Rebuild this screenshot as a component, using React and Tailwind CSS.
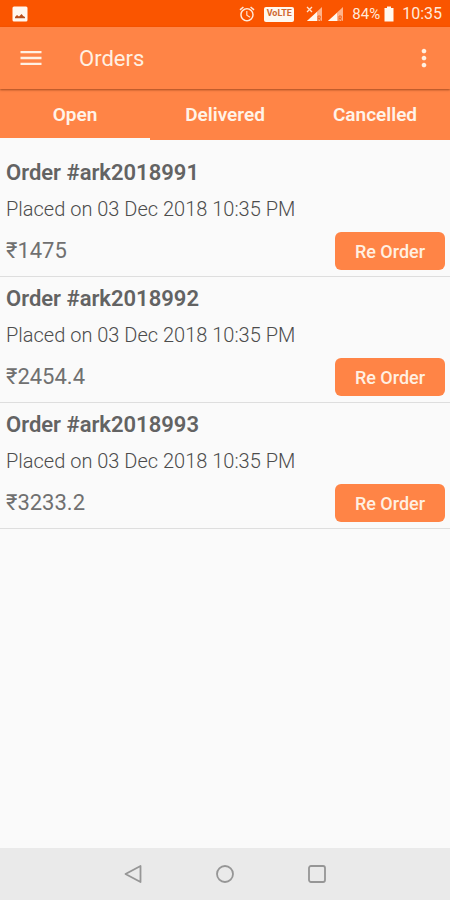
import { useState } from "react";
import clsx from "clsx";
import { MdAlarm, MdMenu, MdMoreVert } from "react-icons/md";

const tabs = ["Open", "Delivered", "Cancelled"];

const orders = [
  { id: "ark2018991", placedOn: "03 Dec 2018 10:35 PM", total: "1475" },
  { id: "ark2018992", placedOn: "03 Dec 2018 10:35 PM", total: "2454.4" },
  { id: "ark2018993", placedOn: "03 Dec 2018 10:35 PM", total: "3233.2" },
];

function PictureIcon() {
  return (
    <svg width="16" height="16" viewBox="0 0 16 16" aria-hidden="true">
      <rect x="0.5" y="0.5" width="15" height="15" rx="1.5" fill="#fff8f0" />
      <path d="M3 12.3V11l2-2 2 1.4L9.6 8l1.6 2 1.8 1v1.3z" fill="#b9501c" />
    </svg>
  );
}

function NoSignalIcon() {
  return (
    <svg width="17" height="17" viewBox="0 0 17 17" aria-hidden="true">
      <path d="M16 1v14H1z" fill="#ffb38a" />
      <path d="M11 6v9H1z" fill="#fff8f0" />
      <path d="M1 1l5 5M6 1L1 6" stroke="#ffe3cf" strokeWidth="1.3" />
      <path d="M12 15v-5h2.2v2.4H12M13 12.4l2.2 2.6" fill="none" stroke="#f2641c" strokeWidth="1" />
    </svg>
  );
}

function SignalIcon() {
  return (
    <svg width="17" height="17" viewBox="0 0 17 17" aria-hidden="true">
      <path d="M16 1v14H1z" fill="#ffb38a" />
      <path d="M10 7v8H1z" fill="#fff8f0" />
      <path d="M12 15v-5h2.2v2.4H12M13 12.4l2.2 2.6" fill="none" stroke="#f2641c" strokeWidth="1" />
    </svg>
  );
}

function BatteryIcon() {
  return (
    <svg width="10" height="16" viewBox="0 0 10 16" aria-hidden="true">
      <path d="M3 0.5h4V2h2.5v13.5h-9V2H3z" fill="#fff8f0" />
    </svg>
  );
}

function StatusBar() {
  return (
    <div className="flex h-[27px] items-center bg-[#fa5500] pt-px pr-2 pl-3 text-base text-[#ffe9da]">
      <PictureIcon />
      <MdAlarm className="ml-auto size-[18px]" />
      <span className="ml-2 flex h-[15px] w-[30px] items-center justify-center rounded-xs bg-[#fff8f0] text-[9px] font-bold text-[#d0692f]">
        VoLTE
      </span>
      <span className="ml-3 flex gap-1">
        <NoSignalIcon />
        <SignalIcon />
      </span>
      <span className="ml-2 text-[15px]">84%</span>
      <span className="ml-1">
        <BatteryIcon />
      </span>
      <span className="ml-2">10:35</span>
    </div>
  );
}

function AppBar() {
  return (
    <header className="relative flex h-[62px] items-center bg-[#ff8446] pr-3 pl-[17px] text-[#fff0e2] shadow-[0_1px_2px_rgba(90,30,0,0.55)]">
      <button type="button" aria-label="Menu">
        <MdMenu className="size-7" />
      </button>
      <h1 className="ml-[34px] text-[22px]">Orders</h1>
      <button type="button" aria-label="More options" className="ml-auto">
        <MdMoreVert className="size-7" />
      </button>
    </header>
  );
}

function OrderItem({ order }) {
  return (
    <li className="border-b border-[#dedede] px-[5px] pt-[7px] pb-[6px]">
      <h2 className="px-px text-[22px] leading-[30px] font-semibold text-[#636363]">
        Order #{order.id}
      </h2>
      <p className="mt-[7px] px-px text-xl leading-7 font-light text-[#4c4c4c]">
        Placed on {order.placedOn}
      </p>
      <div className="mt-[9px] flex items-center justify-between">
        <span className="px-px pb-px text-[22px] text-[#707070]">₹{order.total}</span>
        <button
          type="button"
          className="h-[38px] w-[110px] rounded-md bg-[#ff8446] pt-px text-lg font-medium text-[#fff0e2]"
        >
          Re Order
        </button>
      </div>
    </li>
  );
}

function NavigationBar() {
  return (
    <nav className="flex h-[52px] items-center justify-center gap-[72px] bg-[#eaeaea] text-[#969696]">
      <button type="button" aria-label="Back">
        <svg width="20" height="20" viewBox="0 0 20 20" fill="none" stroke="currentColor" strokeWidth="1.8" strokeLinejoin="round">
          <path d="M17.5 2v16L2.5 10z" />
        </svg>
      </button>
      <button type="button" aria-label="Home">
        <svg width="20" height="20" viewBox="0 0 20 20" fill="none" stroke="currentColor" strokeWidth="1.8">
          <circle cx="10" cy="10" r="8" />
        </svg>
      </button>
      <button type="button" aria-label="Recent apps">
        <svg width="20" height="20" viewBox="0 0 20 20" fill="none" stroke="currentColor" strokeWidth="1.8">
          <rect x="2" y="2" width="16" height="16" rx="2" />
        </svg>
      </button>
    </nav>
  );
}

export default function App() {
  const [activeTab, setActiveTab] = useState("Open");

  return (
    <div className="flex min-h-screen flex-col bg-[#fafafa] font-[Roboto,sans-serif]">
      <StatusBar />
      <AppBar />
      <div role="tablist" className="grid grid-cols-3 bg-[#ff8446]">
        {tabs.map((tab) => (
          <button
            key={tab}
            type="button"
            role="tab"
            aria-selected={tab === activeTab}
            onClick={() => setActiveTab(tab)}
            className={clsx(
              "h-[51px] border-b-2 pt-1 text-[19px] font-semibold text-[#fff3e8]",
              tab === activeTab ? "border-[#fafafa]" : "border-transparent"
            )}
          >
            {tab}
          </button>
        ))}
      </div>
      <main className="grow pt-[11px]">
        <ul>
          {orders.map((order) => (
            <OrderItem key={order.id} order={order} />
          ))}
        </ul>
      </main>
      <NavigationBar />
    </div>
  );
}
